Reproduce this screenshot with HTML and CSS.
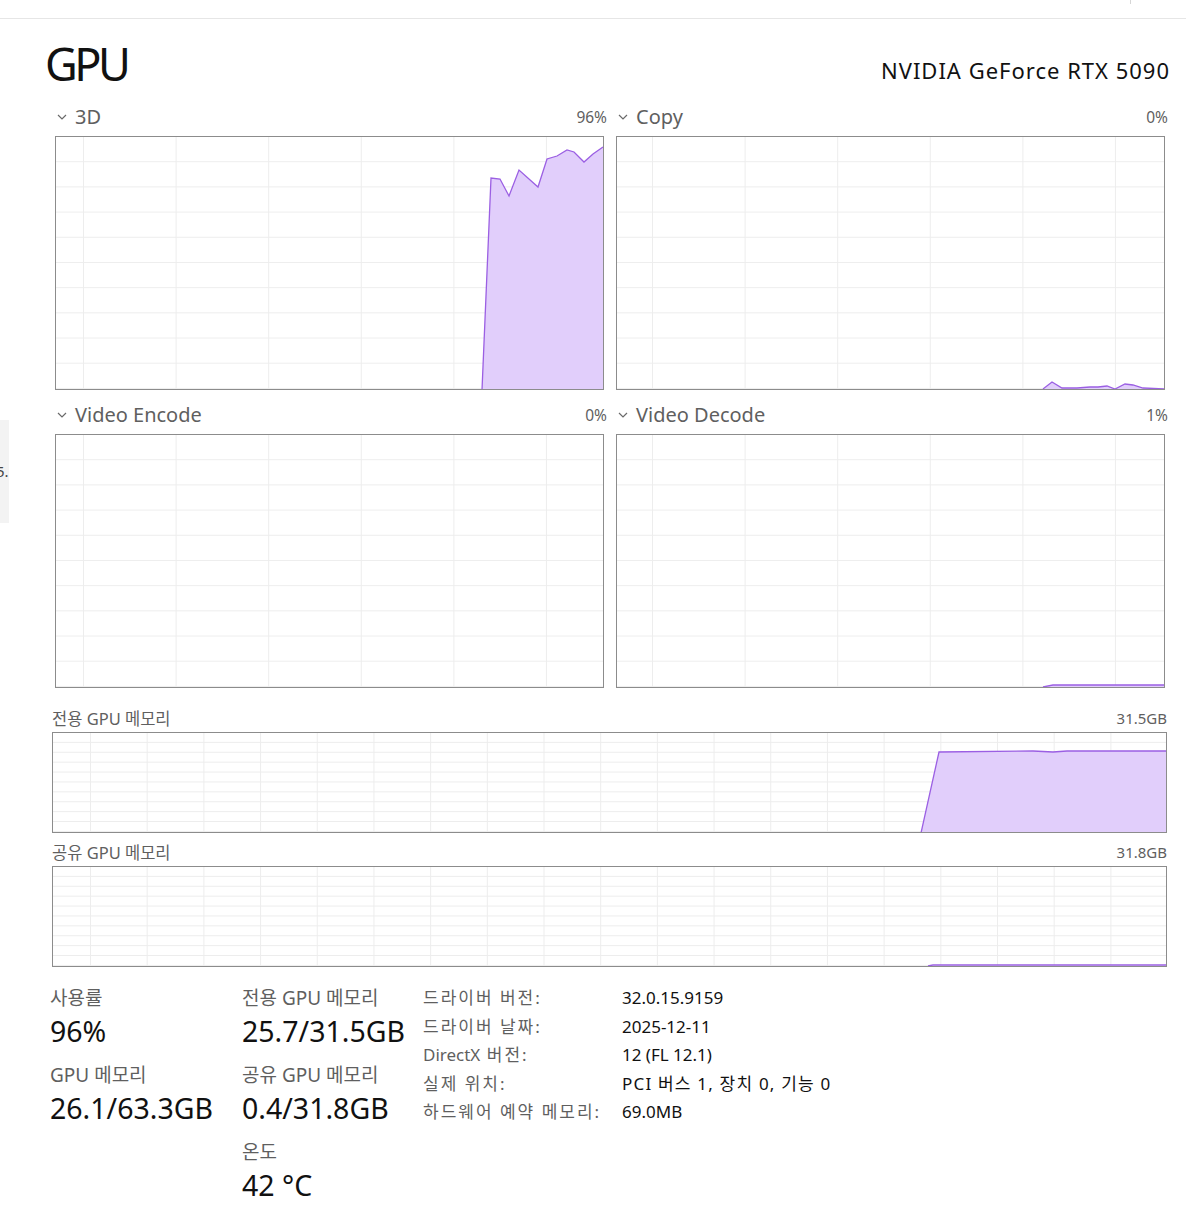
FILE: index.html
```html
<!DOCTYPE html>
<html lang="ko">

<head>
    <meta charset="UTF-8">
    <meta name="viewport" content="width=device-width, initial-scale=1.0">
    <title>GPU</title>
    <link rel="stylesheet" href="styles.css">
</head>

<body>

    <div class="topbar"><span class="topbar-tick"></span></div>
    <div class="side-stub">5.</div>

    <main class="page">
        <header class="page-head">
            <h1>GPU</h1>
            <div class="model">NVIDIA GeForce RTX 5090</div>
        </header>

        <section class="engines">
            <div class="engine">
                <div class="engine-head">
                    <span class="engine-name">
                        <svg class="chevron" viewBox="0 0 10 6"><polyline points="1,1 5,5 9,1" /></svg>3D
                    </span>
                    <span class="engine-pct">96%</span>
                </div>
                <div class="chart chart-engine grid-a">
                    <svg viewBox="0 0 547 252" preserveAspectRatio="none">
                        <polygon class="area" points="426,253 435,41 444,42 453,59 463,33 482,50 491,22 501,19 511,13 518,15 528,25 537,17 547,10 547,253" />
                        <polyline class="line" points="426,253 435,41 444,42 453,59 463,33 482,50 491,22 501,19 511,13 518,15 528,25 537,17 547,10" />
                    </svg>
                </div>
            </div>

            <div class="engine">
                <div class="engine-head">
                    <span class="engine-name">
                        <svg class="chevron" viewBox="0 0 10 6"><polyline points="1,1 5,5 9,1" /></svg>Copy
                    </span>
                    <span class="engine-pct">0%</span>
                </div>
                <div class="chart chart-engine grid-b">
                    <svg viewBox="0 0 547 252" preserveAspectRatio="none">
                        <polygon class="area" points="426,253 435,245 445,251 460,251 473,250 481,250 490,249 498,252 508,247 516,248 526,251 547,252 547,253" />
                        <polyline class="line" points="426,252 435,245 445,251 460,251 473,250 481,250 490,249 498,252 508,247 516,248 526,251 547,252" />
                    </svg>
                </div>
            </div>

            <div class="engine">
                <div class="engine-head">
                    <span class="engine-name">
                        <svg class="chevron" viewBox="0 0 10 6"><polyline points="1,1 5,5 9,1" /></svg>Video Encode
                    </span>
                    <span class="engine-pct">0%</span>
                </div>
                <div class="chart chart-engine grid-a"></div>
            </div>

            <div class="engine">
                <div class="engine-head">
                    <span class="engine-name">
                        <svg class="chevron" viewBox="0 0 10 6"><polyline points="1,1 5,5 9,1" /></svg>Video Decode
                    </span>
                    <span class="engine-pct">1%</span>
                </div>
                <div class="chart chart-engine grid-b">
                    <svg viewBox="0 0 547 252" preserveAspectRatio="none">
                        <polygon class="area" points="426,253 436,250 453,250 547,250 547,253" />
                        <polyline class="line" points="426,252 436,250 453,250 547,250" />
                    </svg>
                </div>
            </div>
        </section>

        <section class="memory">
            <div class="mem-head">
                <span>전용 GPU 메모리</span>
                <span class="mem-max">31.5GB</span>
            </div>
            <div class="chart chart-mem">
                <svg viewBox="0 0 1113 99" preserveAspectRatio="none">
                    <polygon class="area" points="868,100 886,19 980,18 1000,19 1014,18 1113,18 1113,100" />
                    <polyline class="line" points="868,100 886,19 980,18 1000,19 1014,18 1113,18" />
                </svg>
            </div>

            <div class="mem-head">
                <span>공유 GPU 메모리</span>
                <span class="mem-max">31.8GB</span>
            </div>
            <div class="chart chart-mem">
                <svg viewBox="0 0 1113 99" preserveAspectRatio="none">
                    <polyline class="line" points="875,99 880,98 1113,98" />
                </svg>
            </div>
        </section>

        <section class="stats">
            <div class="stat-col">
                <div class="stat">
                    <div class="stat-label">사용률</div>
                    <div class="stat-value">96%</div>
                </div>
                <div class="stat">
                    <div class="stat-label">GPU 메모리</div>
                    <div class="stat-value">26.1/63.3GB</div>
                </div>
            </div>

            <div class="stat-col">
                <div class="stat">
                    <div class="stat-label">전용 GPU 메모리</div>
                    <div class="stat-value">25.7/31.5GB</div>
                </div>
                <div class="stat">
                    <div class="stat-label">공유 GPU 메모리</div>
                    <div class="stat-value">0.4/31.8GB</div>
                </div>
                <div class="stat">
                    <div class="stat-label">온도</div>
                    <div class="stat-value">42 °C</div>
                </div>
            </div>

            <dl class="props">
                <dt>드라이버 버전:</dt>
                <dd>32.0.15.9159</dd>
                <dt>드라이버 날짜:</dt>
                <dd>2025-12-11</dd>
                <dt><span class="latin">DirectX</span> 버전:</dt>
                <dd>12 (FL 12.1)</dd>
                <dt>실제 위치:</dt>
                <dd class="wide">PCI 버스 1, 장치 0, 기능 0</dd>
                <dt>하드웨어 예약 메모리:</dt>
                <dd>69.0MB</dd>
            </dl>
        </section>
    </main>

</body>

</html>
```

FILE: styles.css
```css
:root {
    --color-text: #111111;
    --color-muted: #5f5f5f;
    --color-border: #8c8c8c;
    --color-grid: #ededed;
    --color-line: #9b5fe3;
    --color-fill: #e1cefb;
    --font-family: "Noto Sans", "Noto Sans CJK KR", sans-serif;
}

body {
    margin: 0;
    font-family: var(--font-family);
    color: var(--color-text);
    background: #ffffff;
}

.topbar {
    position: relative;
    height: 18px;
    border-bottom: 1px solid #e6e6e6;
}

.topbar-tick {
    position: absolute;
    left: 1130px;
    top: 0;
    width: 1px;
    height: 4px;
    background: #d6d6d6;
}

/* sidebar edge peeking in from the left */
.side-stub {
    position: absolute;
    left: 0;
    top: 420px;
    width: 9px;
    height: 103px;
    background: #f3f3f3;
    overflow: hidden;
    font-size: 15px;
    line-height: 103px;
    text-indent: -4px;
    color: #444;
}

.page {
    width: 1115px;
    padding-left: 52px;
}

/* header */

.page-head {
    display: flex;
    justify-content: space-between;
    align-items: flex-start;
    height: 79px;
}

.page-head h1 {
    margin: 19px 0 0 -7px;
    font-size: 45px;
    font-weight: 400;
    line-height: 52px;
    letter-spacing: -3.5px;
}

.model {
    margin: 36px -3px 0 0;
    font-size: 22px;
    line-height: 30px;
    letter-spacing: 1px;
}

/* engine charts */

.engines {
    display: grid;
    grid-template-columns: 549px 549px;
    column-gap: 12px;
    row-gap: 6px;
    padding: 0 3px;
}

.engine-head {
    display: flex;
    justify-content: space-between;
    align-items: center;
    height: 37px;
    padding-bottom: 1px;
    margin-right: -3px;
}

.engine-name {
    display: flex;
    align-items: center;
    font-size: 20px;
    color: var(--color-muted);
}

.chevron {
    width: 10px;
    height: 6px;
    margin: 0 8px 0 2px;
    fill: none;
    stroke: #6a6a6a;
    stroke-width: 1.2;
}

.engine-pct {
    font-size: 15.5px;
    color: var(--color-muted);
}

.chart {
    box-sizing: border-box;
    border: 1px solid var(--color-border);
    background-color: #ffffff;
}

.chart svg {
    display: block;
    width: 100%;
    height: 100%;
}

.area {
    fill: var(--color-fill);
    stroke: none;
}

.line {
    fill: none;
    stroke: var(--color-line);
    stroke-width: 1.3;
    vector-effect: non-scaling-stroke;
}

.chart-engine {
    height: 254px;
    background-image:
        linear-gradient(to right, var(--color-grid) 1px, transparent 1px),
        linear-gradient(to top, var(--color-grid) 1px, transparent 1px);
    background-size: 92.6px 100%, 100% 25.2px;
}

.grid-a {
    background-position: 27px 0, 0 0;
}

.grid-b {
    background-position: 35px 0, 0 0;
}

/* memory charts */

.memory {
    margin-top: 16px;
}

.mem-head {
    display: flex;
    justify-content: space-between;
    align-items: center;
    height: 28px;
    font-size: 16.5px;
    color: var(--color-muted);
}

.mem-head + .chart + .mem-head {
    margin-top: 5px;
}

.mem-max {
    font-size: 15px;
}

.chart-mem {
    height: 101px;
    background-image:
        linear-gradient(to right, var(--color-grid) 1px, transparent 1px),
        linear-gradient(to top, var(--color-grid) 1px, transparent 1px);
    background-size: 56.7px 100%, 100% 9.9px;
    background-position: 37px 0, 0 0;
}

/* stats */

.stats {
    display: grid;
    grid-template-columns: 192px 181px 1fr;
    margin: 17px 0 0 -2px;
}

.stat {
    margin-bottom: 10px;
}

.stat-label {
    font-size: 19px;
    line-height: 28px;
    color: var(--color-muted);
}

.stat-value {
    font-size: 28.5px;
    line-height: 39px;
}

.props {
    align-self: start;
    display: grid;
    grid-template-columns: 199px auto;
    margin: 0;
    font-size: 17px;
    line-height: 28.5px;
    white-space: nowrap;
}

.props dt {
    color: var(--color-muted);
    letter-spacing: 2px;
}

.props dt .latin {
    letter-spacing: 0;
}

.props dd {
    margin: 0;
}

.props .wide {
    letter-spacing: 1.2px;
}
```
